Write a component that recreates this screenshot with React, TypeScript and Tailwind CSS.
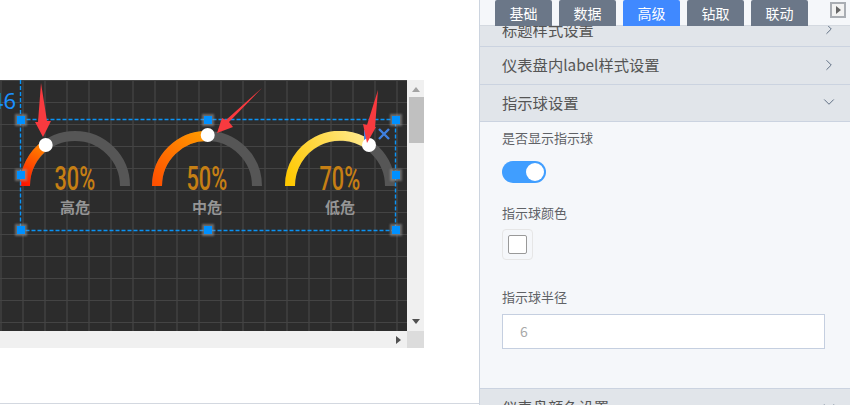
import {ChevronDown, ChevronRight} from 'lucide-react';

const fontStack = "font-['Noto_Sans_CJK_SC','Noto_Sans',sans-serif]";

function Gauge({position, arc, gradientId, from, to, x1, x2, y1, y2, value, label}: {
    position: string, arc: string, gradientId: string, from: string, to: string,
    x1: number, x2: number, y1: number, y2: number, value: string, label: string
}) {
    return (
        <div className={`absolute top-[51px] flex h-[100px] w-[110px] flex-col items-center ${position}`}>
            <svg width="110" height="55" viewBox="0 0 110 55" className="absolute top-0 left-0">
                <defs>
                    <linearGradient id={gradientId} gradientUnits="userSpaceOnUse" x1={x1} y1={y1} x2={x2} y2={y2}>
                        <stop offset="0" stopColor={from}/>
                        <stop offset="1" stopColor={to}/>
                    </linearGradient>
                </defs>
                <path d="M5 55A50 50 0 0 1 105 55" fill="none" stroke="#565656" strokeWidth="10"/>
                <path d={arc} fill="none" stroke={`url(#${gradientId})`} strokeWidth="10"/>
            </svg>
            <div className="mt-[29px] origin-center scale-x-[0.64] font-['Roboto',sans-serif] text-[34px] leading-[36px] font-medium text-[#c67f14]">
                {value}
            </div>
            <div className={`mt-[1px] text-[15px] leading-[20px] font-bold text-[#959595] ${fontStack}`}>{label}</div>
        </div>
    );
}

function Handle({position}: { position: string }) {
    return <div className={`absolute size-[8px] -translate-x-1/2 -translate-y-1/2 bg-[#0090ff] shadow-[0_0_2px_2px_rgba(150,150,150,0.6)] ${position}`}/>;
}

function SectionBar({title, open, height}: { title: string, open?: boolean, height: string }) {
    return (
        <div className={`flex shrink-0 items-center justify-between border-b border-[#cbd3e0] bg-[#e1e5ea] pr-[12px] pb-[2px] pl-[22px] text-[15.3px] text-[#555] ${height}`}>
            <span>{title}</span>
            {open
                ? <ChevronDown className="size-[18px] text-[#5e6d82]" strokeWidth={1.3}/>
                : <ChevronRight className="size-[18px] text-[#5e6d82]" strokeWidth={1.3}/>}
        </div>
    );
}

export default function App() {
    const tabs = ['基础', '数据', '高级', '钻取', '联动'];

    return (
        <div className={`flex h-[405px] w-[850px] overflow-hidden bg-white ${fontStack}`}>
            {/* Canvas side */}
            <div className="h-[404px] w-[479px] shrink-0 border-b border-[#d3d8e0] pt-[80px]">
                <div className="grid w-[424px] grid-cols-[407px_17px] grid-rows-[251px_17px]">
                    <div className="relative overflow-hidden bg-[#2c2c2c] bg-[linear-gradient(#444444_1px,transparent_1px),linear-gradient(90deg,#3b3b3b_2px,transparent_2px)] bg-[size:22px_22px] bg-[position:0_0]">
                        <div className="absolute top-[5px] right-[391px] font-['Noto_Sans',sans-serif] text-[22px] leading-[30px] text-[#1a90ff]">46</div>

                        <Gauge position="left-[20px]" gradientId="g1" from="#ff1500" to="#ff9000" x1={5} y1={55} x2={30} y2={14}
                               arc="M5 55A50 50 0 0 1 25.6 14" value="30%" label="高危"/>
                        <Gauge position="left-[152px]" gradientId="g2" from="#ff5000" to="#ff9a00" x1={5} y1={55} x2={55} y2={5}
                               arc="M5 55A50 50 0 0 1 55.7 5" value="50%" label="中危"/>
                        <Gauge position="left-[285px]" gradientId="g3" from="#ffc800" to="#ffe98c" x1={5} y1={55} x2={84} y2={14}
                               arc="M5 55A50 50 0 0 1 84 14" value="70%" label="低危"/>

                        {/* selection frame */}
                        <svg width="407" height="251" viewBox="0 80 407 251" className="absolute top-0 left-0">
                            <rect x="20.5" y="119.5" width="375" height="111" fill="none" stroke="#0a93f5" strokeWidth="1.4" strokeDasharray="4 2"/>
                            <path d="M20.5 80V119" fill="none" stroke="#0a93f5" strokeWidth="1.4" strokeDasharray="4 2"/>
                        </svg>
                        <Handle position="top-[40px] left-[21px]"/>
                        <Handle position="top-[40px] left-[208px]"/>
                        <Handle position="top-[40px] left-[396px]"/>
                        <Handle position="top-[95px] left-[21px]"/>
                        <Handle position="top-[95px] left-[396px]"/>
                        <Handle position="top-[150px] left-[21px]"/>
                        <Handle position="top-[150px] left-[208px]"/>
                        <Handle position="top-[150px] left-[396px]"/>

                        {/* indicator balls, arrows */}
                        <svg width="407" height="251" viewBox="0 80 407 251" className="absolute top-0 left-0">
                            <path d="M365 130V140H370" fill="none" stroke="#3f7fe0" strokeWidth="2"/>
                            <path d="M379 129L389 139M389 129L379 139" fill="none" stroke="#3f7fe0" strokeWidth="2.4"/>
                            <circle cx="45.7" cy="145" r="7" fill="#fff"/>
                            <circle cx="207.7" cy="135" r="7" fill="#fff"/>
                            <circle cx="369" cy="145" r="7" fill="#fff"/>
                            <path d="M41 83L47 121L51 121L43 137L35 122L38 122Z" fill="#f83a3f"/>
                            <path d="M262 88L229 122L233 127L217 133L222 118L226 120Z" fill="#f83a3f"/>
                            <path d="M378 90L375 127L376 127L367 143L363 124L367 125Z" fill="#f83a3f"/>
                        </svg>
                    </div>

                    {/* vertical scrollbar */}
                    <div className="flex flex-col items-center bg-[#f0f0f0]">
                        <div className="mt-[7px] size-0 border-x-[4px] border-b-[5px] border-x-transparent border-b-[#a3a3a3]"/>
                        <div className="mt-[5px] ml-[2px] h-[46px] w-[15px] bg-[#c0c0c0]"/>
                        <div className="mt-auto mb-[7px] size-0 border-x-[4px] border-t-[5px] border-x-transparent border-t-[#505050]"/>
                    </div>
                    {/* horizontal scrollbar */}
                    <div className="flex items-center justify-end bg-[#f0f0f0] pr-[6px]">
                        <div className="size-0 border-y-[4px] border-l-[5px] border-y-transparent border-l-[#505050]"/>
                    </div>
                    <div className="bg-[#dcdcdc]"/>
                </div>
            </div>

            {/* Settings panel */}
            <div className="flex w-[371px] shrink-0 flex-col border-l border-[#ccd4df] bg-[#f5f7fa]">
                <div className="relative z-10 flex h-[26px] shrink-0 items-start gap-[7px] border-b border-[#d4d9e0] bg-[#f5f7fa] pl-[15px]">
                    {tabs.map(tab => (
                        <div key={tab}
                             className={`flex h-[26px] w-[57px] items-center justify-center rounded-t-[2px] text-[14px] text-white ${tab === '高级' ? 'bg-[#4089ff]' : 'bg-[#6b7788]'}`}>
                            {tab}
                        </div>
                    ))}
                    <div className="absolute top-[2px] left-[350px] flex size-[16px] items-center justify-center border-2 border-[#a9adb3] bg-[#f2f2f2]">
                        <div className="size-0 border-y-[4px] border-l-[5px] border-y-transparent border-l-[#666]"/>
                    </div>
                </div>

                <div className="flex h-[21px] shrink-0 items-start justify-between overflow-hidden border-b border-[#cbd3e0] bg-[#e1e5ea] pr-[12px] pl-[22px] text-[15.3px] leading-[20px] text-[#555]">
                    <span className="-mt-[7px]">标题样式设置</span>
                    <ChevronRight className="-mt-[6px] size-[18px] text-[#5e6d82]" strokeWidth={1.3}/>
                </div>
                <SectionBar title="仪表盘内label样式设置" height="h-[38px]"/>
                <SectionBar title="指示球设置" open height="h-[37px]"/>

                <div className="flex h-[266px] shrink-0 flex-col px-[22px] text-[13px] text-[#606266]">
                    <div className="mt-[6px] leading-[20px]">是否显示指示球</div>
                    <div className="mt-[13px] flex h-[22px] w-[44px] items-center justify-end rounded-full bg-[#409eff] pr-[2px]">
                        <div className="size-[18px] rounded-full bg-white"/>
                    </div>
                    <div className="mt-[20px] leading-[20px]">指示球颜色</div>
                    <div className="mt-[6px] flex size-[31px] items-center justify-center rounded-[4px] border border-[#e6e6e6]">
                        <div className="size-[19px] rounded-[2px] border border-[#999] bg-white"/>
                    </div>
                    <div className="mt-[27px] leading-[20px]">指示球半径</div>
                    <div className="mt-[7px] flex h-[35px] w-[323px] items-center border border-[#c5cfe0] bg-white pl-[17px] text-[14px] text-[#a8a8a8]">
                        6
                    </div>
                </div>

                <div className="border-t border-[#cbd3e0]">
                    <SectionBar title="仪表盘颜色设置" open height="h-[38px]"/>
                </div>
            </div>
        </div>
    );
}
